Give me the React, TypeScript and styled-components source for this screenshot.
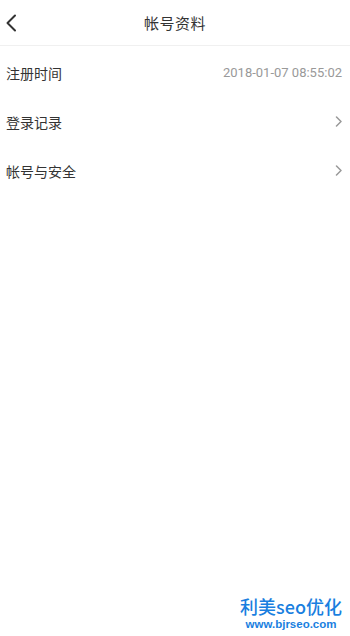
import React from "react";
import styled, { createGlobalStyle } from "styled-components";

const GlobalStyle = createGlobalStyle`
  html, body {
    margin: 0;
    padding: 0;
    background: #fff;
  }
  body {
    font-family: "Noto Sans CJK SC", "Noto Sans", sans-serif;
  }
`;

function BackIcon() {
  return (
    <svg width="12" height="18" viewBox="0 0 12 18" fill="none">
      <path d="M10 1.5 L2.5 9 L10 16.5" stroke="#333" strokeWidth="2" strokeLinecap="round" strokeLinejoin="round" />
    </svg>
  );
}

function ArrowIcon() {
  return (
    <svg width="8" height="11" viewBox="0 0 8 11" fill="none">
      <path d="M1.5 1 L6 5.5 L1.5 10" stroke="#999" strokeWidth="1.5" strokeLinecap="round" strokeLinejoin="round" />
    </svg>
  );
}

const rows = [
  { label: "注册时间", value: "2018-01-07 08:55:02" },
  { label: "登录记录", arrow: true },
  { label: "帐号与安全", arrow: true },
];

export default function App() {
  return (
    <Page>
      <GlobalStyle />
      <Header>
        <Back>
          <BackIcon />
        </Back>
        <Title>帐号资料</Title>
      </Header>
      <List>
        {rows.map((r) => (
          <Row key={r.label}>
            <Label>{r.label}</Label>
            {r.value && <Value>{r.value}</Value>}
            {r.arrow && <ArrowIcon />}
          </Row>
        ))}
      </List>
      <Watermark>
        <Brand>利美seo优化</Brand>
        <Site>www.bjrseo.com</Site>
      </Watermark>
    </Page>
  );
}

const Page = styled.div`
  position: relative;
  width: 350px;
  height: 636px;
  overflow: hidden;
  background: #fff;
`;

const Header = styled.div`
  position: relative;
  height: 45px;
  display: flex;
  align-items: center;
  justify-content: center;
  border-bottom: 1px solid #f0f0f0;
`;

const Back = styled.div`
  position: absolute;
  left: 5px;
  top: 14px;
  display: flex;
`;

const Title = styled.div`
  font-size: 15px;
  color: #333;
  letter-spacing: 0.5px;
`;

const List = styled.div`
  margin-top: 2px;
  display: flex;
  flex-direction: column;
`;

const Row = styled.div`
  height: 49px;
  display: flex;
  align-items: center;
  justify-content: space-between;
  padding: 0 7px 0 6px;
`;

const Label = styled.span`
  font-size: 14px;
  color: #333;
`;

const Value = styled.span`
  font-family: Roboto, "Noto Sans", sans-serif;
  font-size: 13px;
  color: #999;
  margin-right: 1px;
`;

const Watermark = styled.div`
  position: absolute;
  right: 8px;
  bottom: 5px;
  display: flex;
  flex-direction: column;
  align-items: center;
  color: #1a7fe0;
`;

const Brand = styled.div`
  font-size: 18px;
  font-weight: 500;
  line-height: 21px;
`;

const Site = styled.div`
  font-family: "Liberation Sans", Arial, sans-serif;
  font-size: 11.5px;
  font-weight: 700;
  line-height: 14px;
`;
